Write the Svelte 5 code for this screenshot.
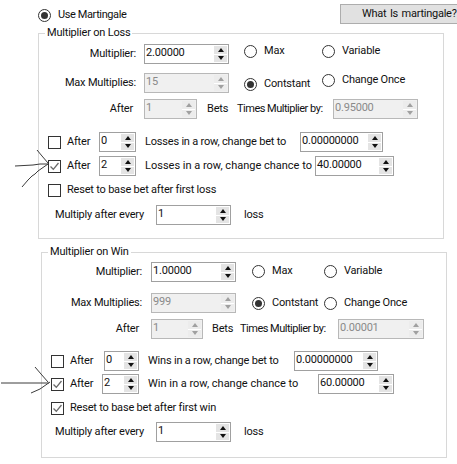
<script>
</script>

{#snippet spin(value, off = false)}
  <div class="spin" class:off>
    <span class="val">{value}</span>
    <span class="btns"><i class="up"></i><i class="down"></i></span>
  </div>
{/snippet}

{#snippet radio(label, on = false, cls = '')}
  <div class="opt {cls}"><span class="circle" class:on></span><span>{label}</span></div>
{/snippet}

{#snippet check(label, on = false)}
  <div class="opt chk">
    <span class="box">
      {#if on}<svg width="11" height="11" viewBox="0 0 11 11"><path d="M1.5 5.5 L4.3 8.3 L9.5 2" fill="none" stroke="#6a6a6a" stroke-width="1.3"/></svg>{/if}
    </span>
    <span>{label}</span>
  </div>
{/snippet}

<div class="page">
  <div class="top">
    {@render radio('Use Martingale', true)}
    <button class="help">What Is martingale?</button>
  </div>

  <section class="group loss">
    <span class="legend">Multiplier on Loss</span>
    <div class="row a">
      <span class="lbl">Multiplier:</span>
      {@render spin('2.00000')}
      {@render radio('Max', false, 'raise')}
      {@render radio('Variable', false, 'raise')}
    </div>
    <div class="row a b">
      <span class="lbl">Max Multiplies:</span>
      {@render spin('15', true)}
      {@render radio('Contstant', true, 'drop')}
      {@render radio('Change Once', false, 'lift')}
    </div>
    <div class="row c">
      <span class="lbl">After</span>
      {@render spin('1', true)}
      <span class="bets">Bets</span>
      <span class="times">Times Multiplier by:</span>
      {@render spin('0.95000', true)}
    </div>
    <div class="row d">
      {@render check('After')}
      {@render spin('0')}
      <span>Losses in a row, change bet to</span>
      {@render spin('0.00000000')}
    </div>
    <div class="row e">
      {@render check('After', true)}
      {@render spin('2')}
      <span>Losses in a row, change chance to</span>
      {@render spin('40.00000')}
    </div>
    <div class="row f">{@render check('Reset to base bet after first loss')}</div>
    <div class="row g">
      <span>Multiply after every</span>
      {@render spin('1')}
      <span class="tail">loss</span>
    </div>
  </section>

  <section class="group win">
    <span class="legend">Multiplier on Win</span>
    <div class="row a">
      <span class="lbl">Multiplier:</span>
      {@render spin('1.00000')}
      {@render radio('Max', false, 'raise')}
      {@render radio('Variable', false, 'raise')}
    </div>
    <div class="row a b">
      <span class="lbl">Max Multiplies:</span>
      {@render spin('999', true)}
      {@render radio('Contstant', true)}
      {@render radio('Change Once')}
    </div>
    <div class="row c">
      <span class="lbl">After</span>
      {@render spin('1', true)}
      <span class="bets">Bets</span>
      <span class="times">Times Multiplier by:</span>
      {@render spin('0.00001', true)}
    </div>
    <div class="row d">
      {@render check('After')}
      {@render spin('0')}
      <span>Wins in a row, change bet to</span>
      {@render spin('0.00000000')}
    </div>
    <div class="row e">
      {@render check('After', true)}
      {@render spin('2')}
      <span>Win in a row, change chance to</span>
      {@render spin('60.00000')}
    </div>
    <div class="row f">{@render check('Reset to base bet after first win', true)}</div>
    <div class="row g">
      <span>Multiply after every</span>
      {@render spin('1')}
      <span class="tail">loss</span>
    </div>
  </section>

  <svg class="ink" width="457" height="464" viewBox="0 0 457 464" fill="none" stroke="#3c3c3c" stroke-width="1">
    <path d="M15 166 L24 165.5 L33 165 L40 164 L48 164" />
    <path d="M37 150 L42 156 L48 163" />
    <path d="M22 187 L28 180 L32 176 L35 174 L38 171 L48 164" />
    <path d="M1 383 L20 383 L36 383 L49 383" />
    <path d="M35 367 L41 374 L48 382" />
    <path d="M31 393 L40 389 L50 382" />
  </svg>
</div>

<style>
  :global(body) { margin: 0; background: #fff; }
  .page {
    position: relative;
    width: 457px;
    height: 464px;
    overflow: hidden;
    background: #fff;
    color: #111;
    font: 11px/16px Roboto, "Liberation Sans", sans-serif;
    letter-spacing: -0.2px;
    box-sizing: border-box;
    padding-top: 4px;
  }
  .top {
    display: flex;
    align-items: center;
    justify-content: space-between;
    height: 20px;
    padding-left: 38px;
  }
  .top .opt { margin-top: 2px; letter-spacing: -0.4px; }
  .help {
    width: 119px;
    height: 20px;
    margin: 0 -2px 0 0;
    padding: 0 0 0 21px;
    text-align: left;
    white-space: nowrap;
    background: #e1e1e1;
    border: 1px solid #adadad;
    color: #111;
    font: inherit;
    letter-spacing: -0.25px;
    word-spacing: 1px;
    flex: none;
  }
  .group {
    position: relative;
    box-sizing: border-box;
    width: 406px;
    height: 206px;
    border: 1px solid #d8d8d8;
  }
  .loss { margin: 9px 0 0 38px; padding-top: 9px; }
  .win { margin: 13px 0 0 41px; padding-top: 9px; }
  .legend {
    position: absolute;
    top: -9px;
    left: 6px;
    padding: 0 2px;
    background: #fff;
    white-space: nowrap;
  }
  .row {
    display: grid;
    align-items: center;
    height: 20px;
    white-space: nowrap;
  }
  .lbl { text-align: right; }
  .bets, .tail { margin-left: 10px; }
  .times { letter-spacing: -0.5px; }
  .e > span { letter-spacing: 0; }

  .loss .a { grid-template-columns: 97px 93px 93px auto; }
  .loss .a > :global(.spin) { margin-left: 8px; }
  .loss .a > :global(.opt:nth-child(3)) { margin-left: 15px; }
  .loss .b { margin-top: 9px; }
  .loss .c { margin-top: 7px; grid-template-columns: 94px 64px 40px 96px 85px; }
  .loss .c > :global(.spin:nth-child(2)) { margin-left: 11px; }
  .loss .d { margin-top: 13px; padding-left: 9px; grid-template-columns: 51px 37px 164px 83px; }
  .loss .d > span { margin-left: 9px; }
  .loss .e { margin-top: 4px; padding-left: 9px; grid-template-columns: 51px 37px 179px 79px; }
  .loss .e > span { margin-left: 9px; }
  .loss .f { margin-top: 4px; padding-left: 9px; }
  .loss .g { margin-top: 5px; padding-left: 16px; grid-template-columns: 101px 75px auto; }
  .loss .g .tail { margin-left: 13px; }

  .win .a { grid-template-columns: 100px 94px 88px auto; }
  .win .a > :global(.spin) { margin-left: 9px; }
  .win .a > :global(.opt:nth-child(3)) { margin-left: 16px; }
  .win .a > :global(.raise) { margin-bottom: 2px; }
  .win .b { margin-top: 11px; }
  .win .c { margin-top: 6px; grid-template-columns: 97px 64px 37px 98px 86px; }
  .win .c > :global(.spin:nth-child(2)) { margin-left: 12px; }
  .win .c .bets { margin-left: 9px; }
  .win .d { margin-top: 12px; padding-left: 9px; grid-template-columns: 53px 35px 155px 84px; }
  .win .d > span { margin-left: 9px; }
  .win .e { margin-top: 3px; padding-left: 9px; grid-template-columns: 51px 37px 179px 76px; }
  .win .e > span { margin-left: 9px; }
  .win .f { margin-top: 4px; padding-left: 9px; }
  .win .g { margin-top: 4px; padding-left: 13px; grid-template-columns: 101px 75px auto; }
  .win .g .tail { margin-left: 13px; }

  .spin {
    box-sizing: border-box;
    display: flex;
    height: 20px;
    background: #fff;
    border: 1px solid #a0a0a0;
    min-width: 0;
  }
  .spin.off { background: #f0f0f0; border-color: #b8b8b8; color: #8a8a8a; }
  .val { flex: 1; padding: 0 0 0 1px; line-height: 15px; min-width: 0; overflow: hidden; }
  .btns {
    flex: none;
    display: flex;
    flex-direction: column;
    width: 13px;
    margin: 1px;
    gap: 1px;
    background: #fff;
  }
  .btns i {
    flex: 1;
    display: flex;
    align-items: center;
    justify-content: center;
    background: #e4e4e4;
  }
  .off .btns i { background: #ececec; }
  .up::before, .down::before {
    content: "";
    border-left: 3.5px solid transparent;
    border-right: 3.5px solid transparent;
  }
  .up::before { border-bottom: 4px solid #111; }
  .down::before { border-top: 4px solid #111; }
  .off .up::before { border-bottom-color: #a0a0a0; }
  .off .down::before { border-top-color: #a0a0a0; }

  .opt { display: flex; align-items: center; gap: 7px; }
  .raise { margin-bottom: 6px; }
  .drop { margin-top: 2px; }
  .lift { margin-bottom: 6px; }
  .circle {
    position: relative;
    box-sizing: border-box;
    flex: none;
    width: 13px;
    height: 13px;
    border: 1px solid #333;
    border-radius: 50%;
    background: #fff;
  }
  .circle.on::after {
    content: "";
    position: absolute;
    inset: 2px;
    border-radius: 50%;
    background: #333;
  }
  .chk { gap: 6px; }
  .box {
    box-sizing: border-box;
    flex: none;
    display: flex;
    width: 13px;
    height: 13px;
    border: 1px solid #333;
    background: #fff;
  }
  .ink { position: absolute; inset: 0; pointer-events: none; }
</style>
